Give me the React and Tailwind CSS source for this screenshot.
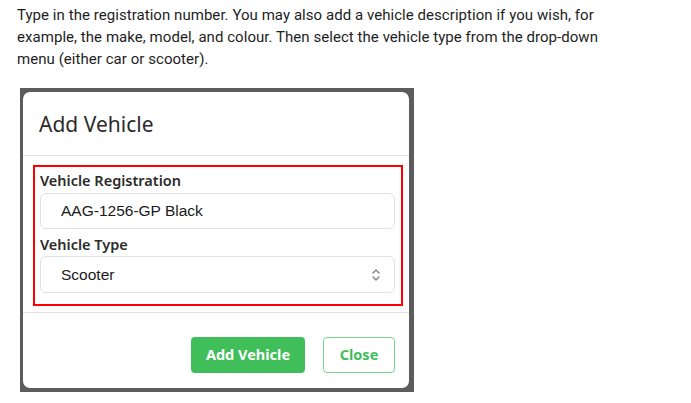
import React from 'react';

// Up/down chevrons drawn at the right of the select box
const SelectChevrons = () => (
    <svg width="10" height="14" viewBox="0 0 10 14" fill="none" stroke="#7a7a7a" strokeWidth="1.3" strokeLinecap="round" strokeLinejoin="round">
        <path d="M2 5l3-3 3 3" />
        <path d="M2 9l3 3 3-3" />
    </svg>
);

export default function App() {
    return (
        <div className="w-[691px] h-[403px] bg-white overflow-hidden" style={{ fontFamily: '"Noto Sans", sans-serif' }}>
            <p className="pl-[17px] pt-[4px] text-[15px] leading-[22px] text-[#1e1e1e] tracking-[0.05px]" style={{ fontFamily: 'Roboto, sans-serif' }}>
                Type in the registration number. You may also add a vehicle description if you wish, for<br />
                example, the make, model, and colour. Then select the vehicle type from the drop-down<br />
                menu (either car or scooter).
            </p>

            <div className="ml-[20px] mt-[18px] w-[394px] h-[304px] bg-[#5c5c5c] pt-[4px] pl-[3px] pr-[5px] pb-[4px]">
                <div className="bg-white rounded-[7px] h-full flex flex-col">
                    {/* header */}
                    <div className="h-[64px] border-b border-[#e2e2e2] flex items-center pl-[16px] pt-[3px]">
                        <h2 className="text-[21px] text-[#2b2b2b] font-normal">Add Vehicle</h2>
                    </div>

                    {/* body */}
                    <div className="pt-[9px] pl-[10px] pr-[6px] pb-[6px] border-b border-[#e2e2e2]">
                        <div className="border-2 border-[#ff0000] pt-[3px] pl-[5px] pr-[6px] pb-[11px]">
                            <label className="block text-[14.5px] font-semibold text-[#2b2b2b] leading-[20px]">Vehicle Registration</label>
                            <div className="mt-[3px] h-[36px] border border-[#e0e2e6] rounded-[6px] flex items-center pl-[20px] text-[15.5px] text-[#1a1a1a]" style={{ fontFamily: '"Liberation Sans", Arial, sans-serif' }}>
                                AAG-1256-GP Black
                            </div>
                            <label className="block mt-[5px] text-[14.5px] font-semibold text-[#2b2b2b] leading-[20px]">Vehicle Type</label>
                            <div className="mt-[2px] h-[37px] border border-[#e0e2e6] rounded-[6px] flex items-center justify-between pl-[20px] pr-[13px] text-[15.5px] text-[#1a1a1a]" style={{ fontFamily: '"Liberation Sans", Arial, sans-serif' }}>
                                <span>Scooter</span>
                                <SelectChevrons />
                            </div>
                        </div>
                    </div>

                    {/* footer */}
                    <div className="flex justify-end gap-[18px] pt-[24px] pr-[14px]">
                        <button className="w-[114px] h-[36px] bg-[#3fbe5a] rounded-[4px] text-white font-bold text-[14.5px]">
                            Add Vehicle
                        </button>
                        <button className="w-[72px] h-[36px] border border-[#74d78c] rounded-[4px] text-[#3fbe5a] font-bold text-[14.5px]">
                            Close
                        </button>
                    </div>
                </div>
            </div>
        </div>
    );
}
